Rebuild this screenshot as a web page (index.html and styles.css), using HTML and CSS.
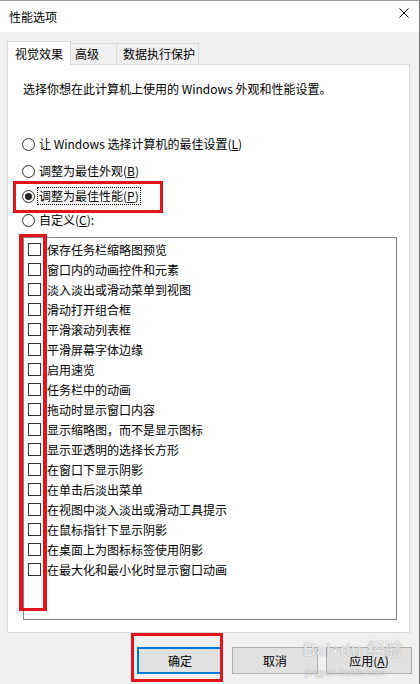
FILE: index.html
```html
<!DOCTYPE html>
<html lang="zh-CN">
<head>
<meta charset="utf-8">
<title>性能选项</title>
<link rel="stylesheet" href="styles.css">
</head>
<body>
<div class="window">
  <div class="titlebar">
    <span class="title">性能选项</span>
    <svg class="close" width="10" height="10" viewBox="0 0 10 10"><path d="M0.5 0.5 L9.5 9.5 M9.5 0.5 L0.5 9.5" stroke="#000" stroke-width="1" fill="none"/></svg>
  </div>
  <div class="tabs">
    <div class="tab tab-active">视觉效果</div>
    <div class="tab tab-2">高级</div>
    <div class="tab tab-3">数据执行保护</div>
  </div>
  <div class="panel">
    <p class="desc">选择你想在此计算机上使用的 Windows 外观和性能设置。</p>
    <div class="radio r1"><span class="rb"></span><span class="rl">让 Windows 选择计算机的最佳设置(<u>L</u>)</span></div>
    <div class="radio r2"><span class="rb"></span><span class="rl">调整为最佳外观(<u>B</u>)</span></div>
    <div class="radio r3"><span class="rb rb-on"></span><span class="rl rl-focus">调整为最佳性能(<u>P</u>)</span></div>
    <div class="radio r4"><span class="rb"></span><span class="rl">自定义(<u>C</u>):</span></div>
    <div class="list">
      <div class="item"><span class="cb"></span><span>保存任务栏缩略图预览</span></div>
      <div class="item"><span class="cb"></span><span>窗口内的动画控件和元素</span></div>
      <div class="item"><span class="cb"></span><span>淡入淡出或滑动菜单到视图</span></div>
      <div class="item"><span class="cb"></span><span>滑动打开组合框</span></div>
      <div class="item"><span class="cb"></span><span>平滑滚动列表框</span></div>
      <div class="item"><span class="cb"></span><span>平滑屏幕字体边缘</span></div>
      <div class="item"><span class="cb"></span><span>启用速览</span></div>
      <div class="item"><span class="cb"></span><span>任务栏中的动画</span></div>
      <div class="item"><span class="cb"></span><span>拖动时显示窗口内容</span></div>
      <div class="item"><span class="cb"></span><span>显示缩略图，而不是显示图标</span></div>
      <div class="item"><span class="cb"></span><span>显示亚透明的选择长方形</span></div>
      <div class="item"><span class="cb"></span><span>在窗口下显示阴影</span></div>
      <div class="item"><span class="cb"></span><span>在单击后淡出菜单</span></div>
      <div class="item"><span class="cb"></span><span>在视图中淡入淡出或滑动工具提示</span></div>
      <div class="item"><span class="cb"></span><span>在鼠标指针下显示阴影</span></div>
      <div class="item"><span class="cb"></span><span>在桌面上为图标标签使用阴影</span></div>
      <div class="item"><span class="cb"></span><span>在最大化和最小化时显示窗口动画</span></div>
    </div>
  </div>
  <div class="buttons">
    <div class="btn btn-default">确定</div>
    <div class="btn">取消</div>
    <div class="btn">应用(<u>A</u>)</div>
  </div>
  <div class="mark mark-radio"></div>
  <div class="mark mark-checks"></div>
  <div class="mark mark-ok"></div>
  <div class="watermark">
    <div class="wm-big">Bai<svg class="paw" width="16" height="16" viewBox="0 0 16 16"><g fill="rgba(255,255,255,0.8)" stroke="rgba(0,0,0,0.3)" stroke-width="0.8"><ellipse cx="3" cy="7" rx="2" ry="2.5"/><ellipse cx="6" cy="3" rx="2" ry="2.5"/><ellipse cx="10" cy="3" rx="2" ry="2.5"/><ellipse cx="13" cy="7" rx="2" ry="2.5"/><path d="M8 7 C5 7 3 12 5 14 C6.5 15 9.5 15 11 14 C13 12 11 7 8 7 Z"/></g></svg>du 经验</div>
    <div class="wm-small">jingyan.baidu.com</div>
  </div>
</div>
</body>
</html>
```

FILE: styles.css
```css
html, body {
  margin: 0;
  padding: 0;
  background: #f0f0f0;
}
body {
  font-family: "Noto Sans CJK SC", "Noto Sans", sans-serif;
  font-size: 12px;
  color: #000;
}
.window {
  position: relative;
  width: 420px;
  height: 684px;
  box-sizing: border-box;
  border-top: 1px solid #9a9a9a;
  border-right: 1px solid #6f6f6f;
  background: #f0f0f0;
  overflow: hidden;
}
.titlebar {
  height: 31px;
  background: #fff;
  display: flex;
  justify-content: space-between;
  align-items: center;
  padding-left: 9px;
  padding-right: 10px;
}
.title {
  line-height: 16px;
}
.close {
  align-self: flex-start;
  margin-top: 7px;
}
.tabs {
  display: flex;
  align-items: flex-end;
  height: 23px;
  margin-top: 9px;
  padding-left: 7px;
}
.tab {
  box-sizing: border-box;
  height: 21px;
  line-height: 19px;
  border: 1px solid #d9d9d9;
  border-bottom: none;
  background: #f0f0f0;
}
.tab-active {
  position: relative;
  z-index: 2;
  height: 24px;
  width: 64px;
  margin-bottom: -1px;
  background: #fff;
  padding-left: 7px;
  line-height: 24px;
}
.tab-2 {
  width: 46px;
  border-left: none;
  padding-left: 4px;
}
.tab-3 {
  width: 82px;
  border-left: none;
  padding-left: 6px;
}
.panel {
  box-sizing: border-box;
  width: 403px;
  height: 569px;
  margin-left: 7px;
  background: #fff;
  border: 1px solid #d9d9d9;
  padding: 16px 0 0 15px;
  position: relative;
  z-index: 1;
}
.desc {
  margin: 0;
  line-height: 16px;
}
.radio {
  display: flex;
  align-items: center;
  height: 16px;
}
.r1 { margin-top: 39px; }
.r2 { margin-top: 11px; }
.r3 { margin-top: 9px; }
.r4 { margin-top: 8px; }
.rb {
  box-sizing: border-box;
  width: 13px;
  height: 13px;
  border: 1px solid #333;
  border-radius: 50%;
  margin-left: -1px;
  margin-right: 4px;
  display: flex;
  align-items: center;
  justify-content: center;
  flex: none;
}
.rb-on::after {
  content: "";
  width: 7px;
  height: 7px;
  border-radius: 50%;
  background: #222;
}
.rl {
  line-height: 16px;
}
.rl-focus {
  outline: 1px dotted #000;
  padding: 0 1px;
  margin-left: -1px;
}
.list {
  box-sizing: border-box;
  width: 374px;
  height: 383px;
  margin-top: 9px;
  border: 1px solid #828282;
  padding-top: 1px;
  background: #fff;
}
.item {
  display: flex;
  align-items: center;
  height: 20px;
  padding-left: 4px;
}
.cb {
  box-sizing: border-box;
  width: 13px;
  height: 13px;
  border: 1px solid #333;
  background: #fff;
  margin-right: 6px;
  flex: none;
}
.buttons {
  display: flex;
  justify-content: flex-end;
  gap: 8px;
  margin-top: 14px;
  padding-right: 7px;
}
.btn {
  box-sizing: border-box;
  width: 86px;
  height: 27px;
  border: 1px solid #adadad;
  background: #e1e1e1;
  display: flex;
  align-items: center;
  justify-content: center;
}
.btn-default {
  border: 2px solid #0078d7;
  margin-right: 1px;
}
.mark {
  position: absolute;
  box-sizing: border-box;
  border: 3px solid #e5131c;
  z-index: 5;
}
.mark-radio {
  left: 13px;
  top: 180px;
  width: 150px;
  height: 32px;
}
.mark-checks {
  left: 19px;
  top: 233px;
  width: 28px;
  height: 377px;
  border-width: 3px 4px 3px 4px;
}
.mark-ok {
  left: 131px;
  top: 632px;
  width: 92px;
  height: 49px;
}
.watermark {
  position: absolute;
  left: 303px;
  top: 640px;
  width: 100px;
  z-index: 6;
  font-family: "Liberation Sans", Arial, "Noto Sans CJK SC", sans-serif;
  color: rgba(255, 255, 255, 0.8);
  text-shadow: 0 0 1px rgba(0, 0, 0, 0.45);
}
.wm-big {
  display: flex;
  align-items: center;
  font-size: 18px;
  font-weight: bold;
  line-height: 18px;
  white-space: nowrap;
}
.paw {
  margin: 0 1px;
}
.wm-small {
  font-size: 10px;
  line-height: 12px;
  margin-top: 8px;
  margin-left: 2px;
  white-space: nowrap;
}
```
